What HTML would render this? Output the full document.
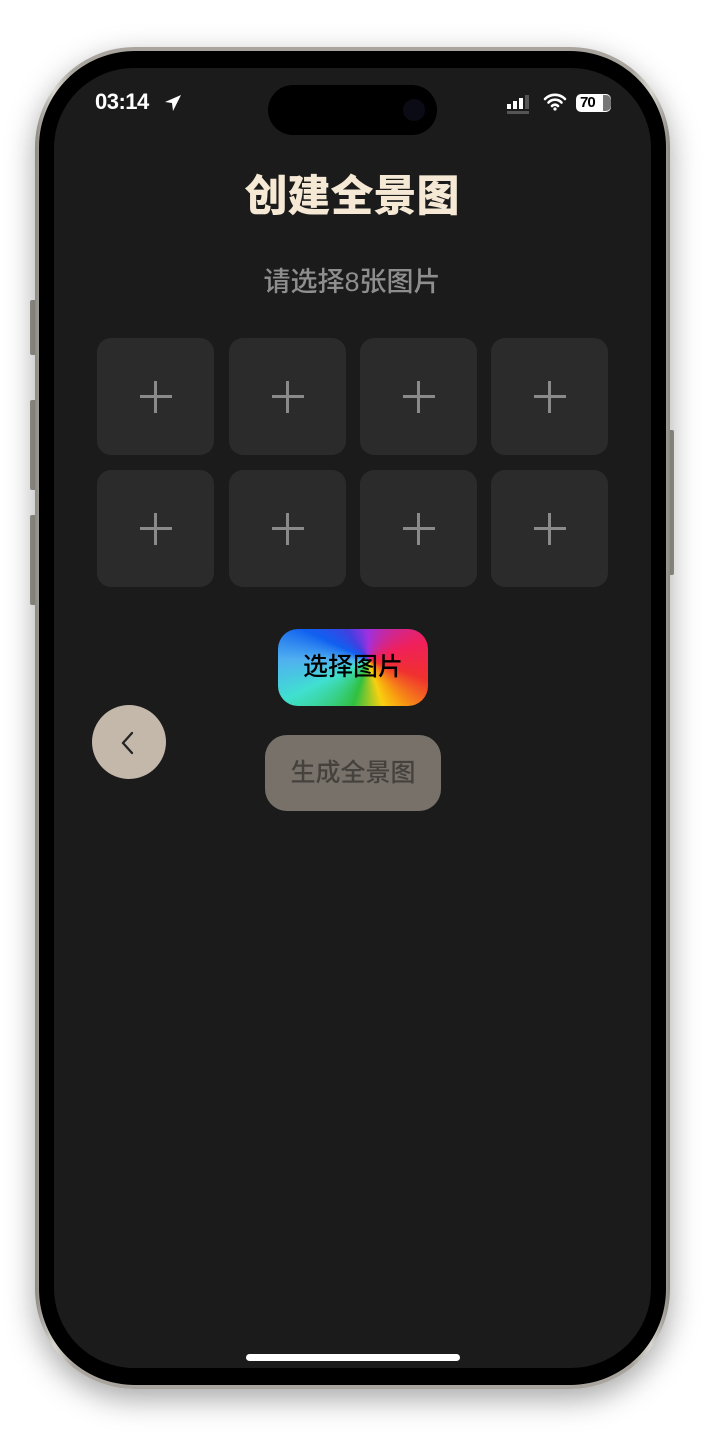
<!DOCTYPE html>
<html><head><meta charset="utf-8"><style>
*{margin:0;padding:0;box-sizing:border-box}
body{width:704px;height:1434px;background:#fff;position:relative;overflow:hidden;font-family:"Liberation Sans","Noto Sans CJK SC",sans-serif}
.frame{position:absolute;left:35px;top:47px;width:635px;height:1342px;border-radius:100px;background:linear-gradient(90deg,#8d8a84,#d8d5cf 3%,#a9a59e 6%,#a9a59e 94%,#d8d5cf 97%,#8d8a84);box-shadow:0 10px 30px rgba(0,0,0,.35)}
.bez{position:absolute;left:39px;top:51px;width:627px;height:1334px;border-radius:96px;background:#000}
.scr{position:absolute;left:54px;top:68px;width:597px;height:1300px;border-radius:80px;background:#1b1b1b;overflow:hidden}
.island{position:absolute;left:268px;top:85px;width:169px;height:50px;border-radius:25px;background:#000}
.cam{position:absolute;left:403px;top:99px;width:22px;height:22px;border-radius:50%;background:#0b0b16}
.t{position:absolute;color:#fff}
.tile{position:absolute;width:117px;height:117px;border-radius:14px;background:#2b2b2b}
.tile:before,.tile:after{content:"";position:absolute;background:#8a8a8a;left:50%;top:50%}
.tile:before{width:32px;height:3px;margin:-1.5px 0 0 -16px}
.tile:after{width:3px;height:32px;margin:-16px 0 0 -1.5px}
.side{position:absolute;background:#9c9891;border-radius:2px}
</style></head><body>
<div class="side" style="left:30px;top:300px;width:6px;height:55px"></div>
<div class="side" style="left:30px;top:400px;width:6px;height:90px"></div>
<div class="side" style="left:30px;top:515px;width:6px;height:90px"></div>
<div class="side" style="left:668px;top:430px;width:6px;height:145px"></div>
<div class="frame"></div><div class="bez"></div><div class="scr"></div>
<div class="island"></div><div class="cam"></div>
<div class="t" style="left:95px;top:89px;font-size:22px;font-weight:bold;letter-spacing:-0.5px">03:14</div>
<svg style="position:absolute;left:163px;top:93px" width="20" height="20" viewBox="0 0 20 20"><path d="M18 2L2 9l7 1 1 8z" fill="#fff"/></svg>
<svg style="position:absolute;left:506px;top:94px" width="30" height="20"><rect x="1" y="10" width="4" height="5" fill="#fff"/><rect x="7" y="7" width="4" height="8" fill="#fff"/><rect x="13" y="4" width="4" height="11" fill="#fff"/><rect x="19" y="1" width="4" height="14" fill="#555"/><rect x="1" y="17" width="22" height="3" fill="#555"/></svg>
<svg style="position:absolute;left:543px;top:93px" width="24" height="18" viewBox="0 0 24 18"><path d="M2 6a14 14 0 0 1 20 0M5.5 9.5a9 9 0 0 1 13 0M9 13a4 4 0 0 1 6 0" stroke="#fff" stroke-width="2.6" fill="none" stroke-linecap="round"/><circle cx="12" cy="16" r="1.6" fill="#fff"/></svg>
<div style="position:absolute;left:576px;top:94px;width:35px;height:18px;border-radius:5px;background:#fff;color:#000;font-size:15px;font-weight:bold;line-height:18px;padding-left:4px;letter-spacing:-1px">70</div>
<div style="position:absolute;left:603px;top:95px;width:8px;height:16px;background:#777;border-radius:0 5px 5px 0"></div>
<div class="t" style="left:0;width:704px;top:162px;text-align:center;font-size:43px;font-weight:900;color:#f5e8d4">创建全景图</div>
<div class="t" style="left:0;width:704px;top:260px;text-align:center;font-size:27px;font-weight:500;color:#8e8e8e">请选择8张图片</div>
<div class="tile" style="left:97px;top:338px"></div><div class="tile" style="left:229px;top:338px"></div><div class="tile" style="left:360px;top:338px"></div><div class="tile" style="left:491px;top:338px"></div>
<div class="tile" style="left:97px;top:470px"></div><div class="tile" style="left:229px;top:470px"></div><div class="tile" style="left:360px;top:470px"></div><div class="tile" style="left:491px;top:470px"></div>
<div style="position:absolute;left:278px;top:629px;width:150px;height:77px;border-radius:20px;background:conic-gradient(from 0deg at 60% 40%,#a030e0,#f0205a 20%,#f03030 30%,#f8a010 40%,#f8d010 45%,#30c040 55%,#40e0d0 68%,#50b0f0 75%,#1060f0 82%,#4040e0 90%,#a030e0);color:#000;font-size:25px;font-weight:500;text-align:center;line-height:77px">选择图片</div>
<div style="position:absolute;left:265px;top:735px;width:176px;height:76px;border-radius:22px;background:#77716a;color:#45413d;font-size:25px;font-weight:500;text-align:center;line-height:76px">生成全景图</div>
<div style="position:absolute;left:92px;top:705px;width:74px;height:74px;border-radius:50%;background:#c3b8aa"></div>
<svg style="position:absolute;left:119px;top:730px" width="20" height="26" viewBox="0 0 20 26"><path d="M13 3L4 13l9 10" stroke="#222" stroke-width="2.2" fill="none" stroke-linecap="round"/></svg>
<div style="position:absolute;left:246px;top:1354px;width:214px;height:7px;border-radius:4px;background:#fff"></div>
</body></html>
